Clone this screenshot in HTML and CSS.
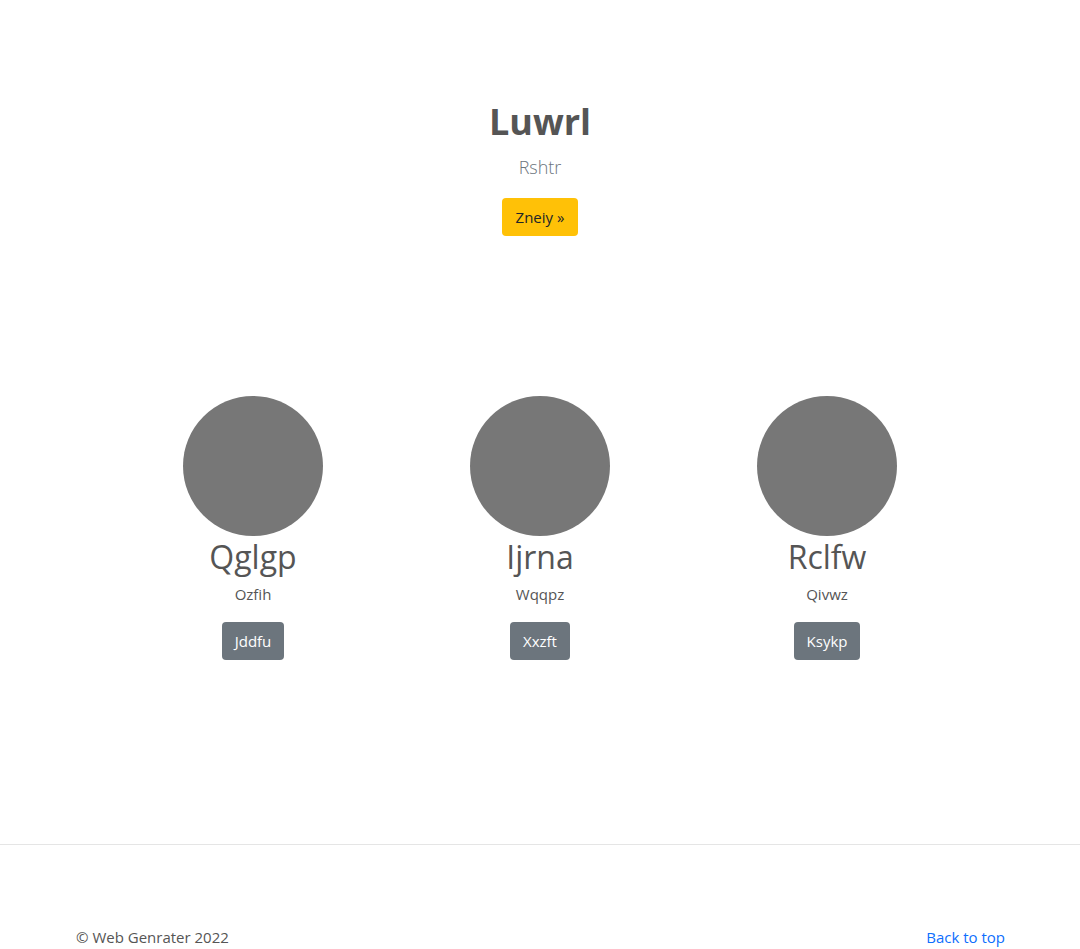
FILE: index.html
```html
<!DOCTYPE html>
<html>
<head>
<meta charset="utf-8">
<link rel="stylesheet" href="styles.css">
</head>
<body>
<main>
  <section class="hero">
    <h1 class="hero-title">Luwrl</h1>
    <p class="hero-lead">Rshtr</p>
    <a class="btn btn-warning" href="#">Zneiy »</a>
  </section>
  <section class="marketing">
    <div class="feature">
      <div class="avatar"></div>
      <h2 class="feature-title">Qglgp</h2>
      <p class="feature-text">Ozfih</p>
      <a class="btn btn-secondary" href="#">Jddfu</a>
    </div>
    <div class="feature">
      <div class="avatar"></div>
      <h2 class="feature-title">Ijrna</h2>
      <p class="feature-text">Wqqpz</p>
      <a class="btn btn-secondary" href="#">Xxzft</a>
    </div>
    <div class="feature">
      <div class="avatar"></div>
      <h2 class="feature-title">Rclfw</h2>
      <p class="feature-text">Qivwz</p>
      <a class="btn btn-secondary" href="#">Ksykp</a>
    </div>
  </section>
</main>
<footer class="footer">
  <div class="footer-inner">
    <p class="copy">© Web Genrater 2022</p>
    <a class="back" href="#">Back to top</a>
  </div>
</footer>
</body>
</html>
```

FILE: styles.css
```css
* { box-sizing: border-box; }
html, body { margin: 0; padding: 0; }
body {
  font-family: "Open Sans", "Noto Sans", sans-serif;
  font-size: 15px;
  color: #555;
  background: #fff;
}
.hero {
  display: flex;
  flex-direction: column;
  align-items: center;
  padding-top: 96px;
}
.hero-title {
  margin: 0;
  font-size: 36px;
  font-weight: 700;
  line-height: 52px;
  color: #555;
}
.hero-lead {
  margin: 4px 0 0;
  font-size: 18px;
  font-weight: 300;
  line-height: 30px;
  color: #6c757d;
}
.btn {
  display: inline-flex;
  align-items: center;
  justify-content: center;
  height: 38px;
  padding: 0 14px;
  border-radius: 4px;
  text-decoration: none;
  font-size: 15px;
}
.hero .btn { margin-top: 16px; }
.btn-warning { background: #ffc107; color: #212529; }
.btn-secondary { background: #6c757d; color: #fff; font-size: 15px; font-weight: 500; padding: 0 13px; }
.marketing {
  display: grid;
  grid-template-columns: repeat(3, 287px);
  justify-content: center;
  margin-top: 160px;
}
.feature {
  display: flex;
  flex-direction: column;
  align-items: center;
}
.avatar {
  width: 140px;
  height: 140px;
  border-radius: 50%;
  background: #777;
}
.feature-title {
  margin: 0;
  font-size: 32px;
  font-weight: 400;
  line-height: 42px;
  color: #555;
}
.feature-text {
  margin: 4px 0 0;
  font-size: 15px;
  line-height: 24px;
}
.feature .btn { margin-top: 16px; }
.footer {
  margin-top: 184px;
  border-top: 1px solid #e5e5e5;
  padding-top: 80px;
}
.footer-inner {
  width: 960px;
  margin: 0 auto;
  padding: 0 15px 0 16px;
  display: flex;
  justify-content: space-between;
  align-items: center;
}
.copy { margin: 0; line-height: 24px; }
.back { color: #0d6efd; text-decoration: none; line-height: 24px; }
```
